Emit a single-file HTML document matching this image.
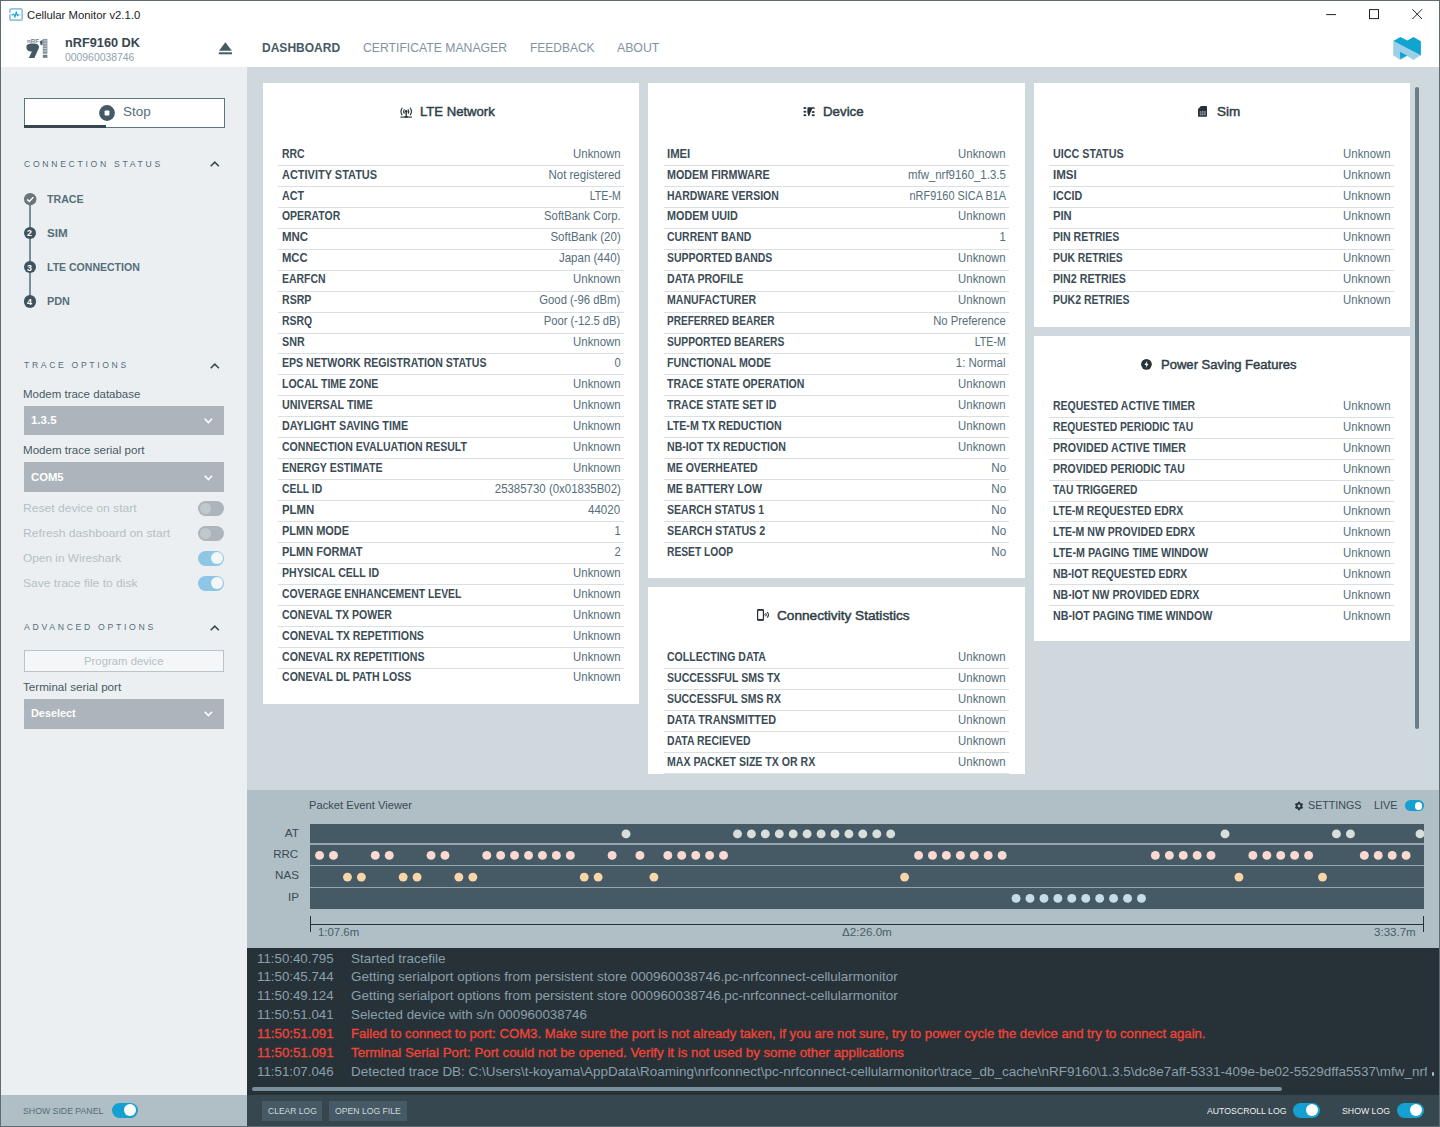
<!DOCTYPE html>
<html>
<head>
<meta charset="utf-8">
<title>Cellular Monitor v2.1.0</title>
<style>
*{box-sizing:border-box;margin:0;padding:0}
html,body{width:1440px;height:1127px;overflow:hidden;background:#fff;font-family:"Liberation Sans",sans-serif;color:#263238}
.abs{position:absolute}
.t{position:absolute;white-space:nowrap;line-height:1}
svg{position:absolute;overflow:visible}
#titlebar{left:0;top:0;width:1440px;height:30px;background:#fff}
#navbar{left:0;top:30px;width:1440px;height:37px;background:#fff}
#sidebar{left:0;top:67px;width:247px;height:1028px;background:#eceff1}
#main{left:247px;top:67px;width:1193px;height:723px;background:#cfd8dc}
#pev{left:247px;top:790px;width:1193px;height:158.3px;background:#b0bec5}
#log{left:247px;top:948.3px;width:1193px;height:147px;background:#263238}
#botL{left:0;top:1095px;width:247px;height:32px;background:#b0bec5}
#botR{left:247px;top:1095.3px;width:1193px;height:32px;background:#37474f}
.card{position:absolute;background:#fff;width:376.4px}
.sep{position:absolute;width:345.6px;height:1px;background:#d9e0e4}
.tg{position:absolute;border-radius:8px}
.tg u{position:absolute;border-radius:50%;background:#fff}
.dd{position:absolute;left:24px;width:200.2px;background:#abb5bb}
</style>
</head>
<body>
<div id="titlebar" class="abs"></div>
<div id="navbar" class="abs"></div>
<div id="sidebar" class="abs"></div>
<div id="main" class="abs"></div>
<div id="pev" class="abs"></div>
<div id="log" class="abs"></div>
<div id="botL" class="abs"></div>
<div id="botR" class="abs"></div>
<svg style="left:9px;top:7.86px" width="15" height="14" viewBox="0 0 15 14">
<rect x="0.9" y="0.9" width="12.3" height="11.3" rx="1.5" fill="#fff" stroke="#8ec5e6" stroke-width="1.8"/>
<rect x="0" y="4.9" width="1.9" height="1.5" fill="#fff"/>
<path d="M0.4 7H4M9 7H13" stroke="#9fcfea" stroke-width="1.2" fill="none"/>
<path d="M3.2 6.7L4.9 6.1L6 9.2L7.3 3.7L8.3 8L9.2 6.6" stroke="#0fa3d0" stroke-width="1.05" fill="none" stroke-linejoin="round" stroke-linecap="round"/>
</svg>
<span class="t" style="top:9.00px;font-size:11.60px;color:#222;left:27.26px;transform-origin:0 0;transform:scaleX(0.9762);">Cellular Monitor v2.1.0</span>
<svg style="left:1320px;top:4px" width="110" height="22" viewBox="1320 4 110 22">
<path d="M1326.2 14.6H1336" stroke="#222" stroke-width="1" fill="none"/>
<rect x="1369.5" y="9.6" width="9" height="9" fill="none" stroke="#222" stroke-width="1"/>
<path d="M1412.4 9.3L1422 19M1422 9.3L1412.4 19" stroke="#222" stroke-width="1" fill="none"/>
</svg>
<svg style="left:26px;top:38px" width="23" height="21" viewBox="26 38 23 21">
<path d="M26.4 47.4C26.2 44.6 28.2 43.4 32.6 43.4C37.2 43.4 39.6 44.8 38.9 48L34.4 58H28.8L31.9 51.4C28.4 51.6 26.6 50.2 26.4 47.4Z" fill="#465a66"/>
<path d="M39.7 41.4L42.6 39.8V44.4L40.8 45.4Z" fill="#465a66"/>
<rect x="42.8" y="39" width="4.6" height="14.8" fill="#8796a0"/>
<rect x="42.8" y="54.8" width="4.6" height="3" fill="#6b7d88"/>
<path d="M43.6 41H46.8M43.6 43.5H46.8M43.6 46H46.8M43.6 48.5H46.8M43.6 51H46.8" stroke="#dfe5e8" stroke-width=".7"/>
</svg>
<span class="t" style="top:39.40px;font-size:5.60px;color:#6d7f8a;font-weight:bold;left:26.59px;transform-origin:0 0;transform:scaleX(1.0946);">nRF</span>
<span class="t" style="top:36.00px;font-size:13.20px;color:#37474f;font-weight:bold;left:64.87px;transform-origin:0 0;transform:scaleX(0.9653);">nRF9160 DK</span>
<span class="t" style="top:51.60px;font-size:10.80px;color:#90a4ae;left:65.01px;transform-origin:0 0;transform:scaleX(0.9627);">000960038746</span>
<svg style="left:218px;top:42px" width="15" height="13" viewBox="218 42 15 13">
<path d="M225.4 42.3L231.8 50.7H219Z" fill="#455a64"/><rect x="218.8" y="52.3" width="13.2" height="2" fill="#455a64"/></svg>
<span class="t" style="top:42.00px;font-size:12.80px;color:#455a64;font-weight:bold;left:262.30px;transform-origin:0 0;transform:scaleX(0.9395);">DASHBOARD</span>
<span class="t" style="top:42.00px;font-size:12.80px;color:#8193a0;left:363.10px;transform-origin:0 0;transform:scaleX(0.9541);">CERTIFICATE MANAGER</span>
<span class="t" style="top:42.00px;font-size:12.80px;color:#8193a0;left:529.70px;transform-origin:0 0;transform:scaleX(0.9357);">FEEDBACK</span>
<span class="t" style="top:42.00px;font-size:12.80px;color:#8193a0;left:616.60px;transform-origin:0 0;transform:scaleX(0.9582);">ABOUT</span>
<svg style="left:1393px;top:36px" width="29" height="25" viewBox="1393 36 29 25">
<path d="M1393.2 40.8L1400 38L1420.9 52V55.2L1413.4 59.9L1407.2 56.1L1400.4 59.9L1393.2 55.2Z" fill="#9dcfe9"/>
<path d="M1393.6 41L1400.3 36.9L1407.4 40.6L1413.4 36.9L1420.9 41.2V55.2Z" fill="#10a4d0"/>
<path d="M1399.9 51.7L1407.1 55.4L1400.2 59Z" fill="#10a4d0"/>
</svg>
<div class="abs" style="left:0;top:0;width:1440px;height:1px;background:#5d6b72"></div><div class="abs" style="left:0;top:0;width:1px;height:1127px;background:#5d6b72"></div><div class="abs" style="left:1439px;top:0;width:1px;height:1127px;background:#5d6b72"></div><div class="abs" style="left:0;top:1126px;width:1440px;height:1px;background:#5d6b72"></div>
<div class="abs" style="left:23.5px;top:97.5px;width:201px;height:30.5px;background:#fff;border:1px solid #5f7480"></div>
<div class="abs" style="left:23.5px;top:125px;width:82.3px;height:3px;background:#37474f"></div>
<svg style="left:99px;top:104.5px" width="16" height="16" viewBox="0 0 16 16"><circle cx="8" cy="8" r="7.9" fill="#455a64"/><rect x="5.6" y="5.6" width="4.8" height="4.8" rx=".6" fill="#fff"/></svg>
<span class="t" style="top:105.30px;font-size:13.20px;color:#546e7a;left:123.47px;transform-origin:0 0;transform:scaleX(1.0239);">Stop</span>
<span class="t" style="top:158.80px;font-size:9.40px;color:#546e7a;letter-spacing:2.90px;left:23.68px;transform-origin:0 0;transform:scaleX(0.9223);">CONNECTION STATUS</span>
<svg style="left:210.3px;top:161.3px" width="10" height="6" viewBox="0 0 10 6"><path d="M0.7 5.2L4.8 1.1L8.9 5.2" stroke="#37474f" stroke-width="1.5" fill="none"/></svg>
<span class="t" style="top:360.40px;font-size:9.40px;color:#546e7a;letter-spacing:2.90px;left:23.68px;transform-origin:0 0;transform:scaleX(0.9180);">TRACE OPTIONS</span>
<svg style="left:210.3px;top:363.0px" width="10" height="6" viewBox="0 0 10 6"><path d="M0.7 5.2L4.8 1.1L8.9 5.2" stroke="#37474f" stroke-width="1.5" fill="none"/></svg>
<span class="t" style="top:622.40px;font-size:9.40px;color:#546e7a;letter-spacing:2.90px;left:23.68px;transform-origin:0 0;transform:scaleX(0.9252);">ADVANCED OPTIONS</span>
<svg style="left:210.3px;top:625.3px" width="10" height="6" viewBox="0 0 10 6"><path d="M0.7 5.2L4.8 1.1L8.9 5.2" stroke="#37474f" stroke-width="1.5" fill="none"/></svg>
<div class="abs" style="left:29.1px;top:199px;width:1.5px;height:102px;background:#78909c"></div>
<svg style="left:23.6px;top:192.9px" width="13" height="13" viewBox="0 0 13 13"><circle cx="6.2" cy="6.2" r="6.2" fill="#6b7478"/><path d="M3.2 6.4L5.3 8.5L9.3 4.2" stroke="#fff" stroke-width="1.5" fill="none"/></svg>
<div class="abs" style="left:23.6px;top:227.0px;width:12.4px;height:12.4px;border-radius:50%;background:#3e5360"></div>
<span class="t" style="top:228.40px;font-size:9.40px;color:#fff;font-weight:bold;left:26.98px;transform-origin:0 0;transform:scaleX(0.9500);">2</span>
<div class="abs" style="left:23.6px;top:261.1px;width:12.4px;height:12.4px;border-radius:50%;background:#3e5360"></div>
<span class="t" style="top:262.50px;font-size:9.40px;color:#fff;font-weight:bold;left:26.98px;transform-origin:0 0;transform:scaleX(0.9500);">3</span>
<div class="abs" style="left:23.6px;top:295.2px;width:12.4px;height:12.4px;border-radius:50%;background:#3e5360"></div>
<span class="t" style="top:296.60px;font-size:9.40px;color:#fff;font-weight:bold;left:26.98px;transform-origin:0 0;transform:scaleX(0.9500);">4</span>
<span class="t" style="top:193.60px;font-size:11.80px;color:#546e7a;font-weight:bold;left:47.25px;transform-origin:0 0;transform:scaleX(0.8996);">TRACE</span>
<span class="t" style="top:227.70px;font-size:11.80px;color:#546e7a;font-weight:bold;left:47.25px;transform-origin:0 0;transform:scaleX(0.9846);">SIM</span>
<span class="t" style="top:261.80px;font-size:11.80px;color:#546e7a;font-weight:bold;left:47.25px;transform-origin:0 0;transform:scaleX(0.8921);">LTE CONNECTION</span>
<span class="t" style="top:295.90px;font-size:11.80px;color:#546e7a;font-weight:bold;left:47.25px;transform-origin:0 0;transform:scaleX(0.9214);">PDN</span>
<span class="t" style="top:388.80px;font-size:11.80px;color:#455a64;left:23.35px;transform-origin:0 0;transform:scaleX(0.9726);">Modem trace database</span>
<div class="dd" style="top:405.5px;height:29.7px"></div>
<span class="t" style="top:415.30px;font-size:11.80px;color:#fff;font-weight:bold;left:31.15px;transform-origin:0 0;transform:scaleX(0.9738);">1.3.5</span>
<svg style="left:204.1px;top:418.0px" width="9" height="6" viewBox="0 0 9 6"><path d="M0.7 0.8L4.4 4.6L8.1 0.8" stroke="#fff" stroke-width="1.6" fill="none"/></svg>
<span class="t" style="top:445.40px;font-size:11.80px;color:#455a64;left:23.35px;transform-origin:0 0;transform:scaleX(0.9801);">Modem trace serial port</span>
<div class="dd" style="top:462.1px;height:29.9px"></div>
<span class="t" style="top:471.90px;font-size:11.80px;color:#fff;font-weight:bold;left:30.65px;transform-origin:0 0;transform:scaleX(0.9551);">COM5</span>
<svg style="left:204.1px;top:474.7px" width="9" height="6" viewBox="0 0 9 6"><path d="M0.7 0.8L4.4 4.6L8.1 0.8" stroke="#fff" stroke-width="1.6" fill="none"/></svg>
<span class="t" style="top:503.00px;font-size:11.80px;color:#b4c0c6;left:23.35px;transform-origin:0 0;transform:scaleX(1.0256);">Reset device on start</span>
<span class="t" style="top:527.80px;font-size:11.80px;color:#b4c0c6;left:23.35px;transform-origin:0 0;transform:scaleX(1.0286);">Refresh dashboard on start</span>
<span class="t" style="top:552.80px;font-size:11.80px;color:#b4c0c6;left:23.35px;transform-origin:0 0;transform:scaleX(1.0049);">Open in Wireshark</span>
<span class="t" style="top:577.60px;font-size:11.80px;color:#b4c0c6;left:23.35px;transform-origin:0 0;transform:scaleX(1.0208);">Save trace file to disk</span>
<div class="tg" style="left:198.1px;top:501.1px;width:26.3px;height:14.8px;background:#abb5bb"><u style="left:1.7px;top:1.7px;width:11.4px;height:11.4px;background:#c0c8cc"></u></div>
<div class="tg" style="left:198.1px;top:526.2px;width:26.3px;height:14.8px;background:#abb5bb"><u style="left:1.7px;top:1.7px;width:11.4px;height:11.4px;background:#c0c8cc"></u></div>
<div class="tg" style="left:198.1px;top:551.1px;width:26.3px;height:14.8px;background:#8ec6e6"><u style="left:12.9px;top:1.4px;width:12.0px;height:12.0px;background:#f4f6f7"></u></div>
<div class="tg" style="left:198.1px;top:575.8px;width:26.3px;height:14.8px;background:#8ec6e6"><u style="left:12.9px;top:1.4px;width:12.0px;height:12.0px;background:#f4f6f7"></u></div>
<div class="abs" style="left:24px;top:649.5px;width:200.2px;height:22.3px;background:#f4f6f7;border:1px solid #b9c5ca"></div>
<span class="t" style="top:655.50px;font-size:11.80px;color:#b4c0c6;left:84.15px;transform-origin:0 0;transform:scaleX(0.9617);">Program device</span>
<span class="t" style="top:682.40px;font-size:11.80px;color:#455a64;left:23.35px;transform-origin:0 0;transform:scaleX(0.9850);">Terminal serial port</span>
<div class="dd" style="top:699.1px;height:29.8px"></div>
<span class="t" style="top:707.80px;font-size:11.80px;color:#fff;font-weight:bold;left:30.65px;transform-origin:0 0;transform:scaleX(0.9203);">Deselect</span>
<svg style="left:204.1px;top:710.5px" width="9" height="6" viewBox="0 0 9 6"><path d="M0.7 0.8L4.4 4.6L8.1 0.8" stroke="#fff" stroke-width="1.6" fill="none"/></svg>
<div class="card" style="left:263px;top:82.6px;height:621.2px"></div>
<span class="t" style="top:148.60px;font-size:11.90px;color:#3b4c56;font-weight:bold;left:281.75px;transform-origin:0 0;transform:scaleX(0.8799);">RRC</span>
<span class="t" style="top:148.60px;font-size:11.90px;color:#546e7a;right:819.52px;transform-origin:100% 0;transform:scaleX(0.9575);">Unknown</span>
<div class="sep" style="left:278.2px;top:164.90px"></div>
<span class="t" style="top:169.56px;font-size:11.90px;color:#3b4c56;font-weight:bold;left:281.75px;transform-origin:0 0;transform:scaleX(0.9225);">ACTIVITY STATUS</span>
<span class="t" style="top:169.56px;font-size:11.90px;color:#546e7a;right:819.52px;transform-origin:100% 0;transform:scaleX(0.9676);">Not registered</span>
<div class="sep" style="left:278.2px;top:185.85px"></div>
<span class="t" style="top:190.51px;font-size:11.90px;color:#3b4c56;font-weight:bold;left:281.75px;transform-origin:0 0;transform:scaleX(0.9032);">ACT</span>
<span class="t" style="top:190.51px;font-size:11.90px;color:#546e7a;right:819.52px;transform-origin:100% 0;transform:scaleX(0.8929);">LTE-M</span>
<div class="sep" style="left:278.2px;top:206.80px"></div>
<span class="t" style="top:211.46px;font-size:11.90px;color:#3b4c56;font-weight:bold;left:281.75px;transform-origin:0 0;transform:scaleX(0.8774);">OPERATOR</span>
<span class="t" style="top:211.46px;font-size:11.90px;color:#546e7a;right:819.52px;transform-origin:100% 0;transform:scaleX(0.9495);">SoftBank Corp.</span>
<div class="sep" style="left:278.2px;top:227.75px"></div>
<span class="t" style="top:232.42px;font-size:11.90px;color:#3b4c56;font-weight:bold;left:281.75px;transform-origin:0 0;transform:scaleX(0.9659);">MNC</span>
<span class="t" style="top:232.42px;font-size:11.90px;color:#546e7a;right:819.52px;transform-origin:100% 0;transform:scaleX(0.9665);">SoftBank (20)</span>
<div class="sep" style="left:278.2px;top:248.70px"></div>
<span class="t" style="top:253.38px;font-size:11.90px;color:#3b4c56;font-weight:bold;left:281.75px;transform-origin:0 0;transform:scaleX(0.9438);">MCC</span>
<span class="t" style="top:253.38px;font-size:11.90px;color:#546e7a;right:819.52px;transform-origin:100% 0;transform:scaleX(0.9701);">Japan (440)</span>
<div class="sep" style="left:278.2px;top:269.65px"></div>
<span class="t" style="top:274.33px;font-size:11.90px;color:#3b4c56;font-weight:bold;left:281.75px;transform-origin:0 0;transform:scaleX(0.8774);">EARFCN</span>
<span class="t" style="top:274.33px;font-size:11.90px;color:#546e7a;right:819.52px;transform-origin:100% 0;transform:scaleX(0.9575);">Unknown</span>
<div class="sep" style="left:278.2px;top:290.60px"></div>
<span class="t" style="top:295.28px;font-size:11.90px;color:#3b4c56;font-weight:bold;left:281.75px;transform-origin:0 0;transform:scaleX(0.8888);">RSRP</span>
<span class="t" style="top:295.28px;font-size:11.90px;color:#546e7a;right:819.52px;transform-origin:100% 0;transform:scaleX(0.9498);">Good (-96 dBm)</span>
<div class="sep" style="left:278.2px;top:311.55px"></div>
<span class="t" style="top:316.24px;font-size:11.90px;color:#3b4c56;font-weight:bold;left:281.75px;transform-origin:0 0;transform:scaleX(0.8781);">RSRQ</span>
<span class="t" style="top:316.24px;font-size:11.90px;color:#546e7a;right:819.52px;transform-origin:100% 0;transform:scaleX(0.9419);">Poor (-12.5 dB)</span>
<div class="sep" style="left:278.2px;top:332.50px"></div>
<span class="t" style="top:337.19px;font-size:11.90px;color:#3b4c56;font-weight:bold;left:281.75px;transform-origin:0 0;transform:scaleX(0.9029);">SNR</span>
<span class="t" style="top:337.19px;font-size:11.90px;color:#546e7a;right:819.52px;transform-origin:100% 0;transform:scaleX(0.9575);">Unknown</span>
<div class="sep" style="left:278.2px;top:353.45px"></div>
<span class="t" style="top:358.15px;font-size:11.90px;color:#3b4c56;font-weight:bold;left:281.75px;transform-origin:0 0;transform:scaleX(0.8894);">EPS NETWORK REGISTRATION STATUS</span>
<span class="t" style="top:358.15px;font-size:11.90px;color:#546e7a;right:819.52px;transform-origin:100% 0;transform:scaleX(0.9400);">0</span>
<div class="sep" style="left:278.2px;top:374.40px"></div>
<span class="t" style="top:379.11px;font-size:11.90px;color:#3b4c56;font-weight:bold;left:281.75px;transform-origin:0 0;transform:scaleX(0.8850);">LOCAL TIME ZONE</span>
<span class="t" style="top:379.11px;font-size:11.90px;color:#546e7a;right:819.52px;transform-origin:100% 0;transform:scaleX(0.9575);">Unknown</span>
<div class="sep" style="left:278.2px;top:395.35px"></div>
<span class="t" style="top:400.06px;font-size:11.90px;color:#3b4c56;font-weight:bold;left:281.75px;transform-origin:0 0;transform:scaleX(0.9039);">UNIVERSAL TIME</span>
<span class="t" style="top:400.06px;font-size:11.90px;color:#546e7a;right:819.52px;transform-origin:100% 0;transform:scaleX(0.9575);">Unknown</span>
<div class="sep" style="left:278.2px;top:416.30px"></div>
<span class="t" style="top:421.01px;font-size:11.90px;color:#3b4c56;font-weight:bold;left:281.75px;transform-origin:0 0;transform:scaleX(0.9043);">DAYLIGHT SAVING TIME</span>
<span class="t" style="top:421.01px;font-size:11.90px;color:#546e7a;right:819.52px;transform-origin:100% 0;transform:scaleX(0.9575);">Unknown</span>
<div class="sep" style="left:278.2px;top:437.25px"></div>
<span class="t" style="top:441.97px;font-size:11.90px;color:#3b4c56;font-weight:bold;left:281.75px;transform-origin:0 0;transform:scaleX(0.8856);">CONNECTION EVALUATION RESULT</span>
<span class="t" style="top:441.97px;font-size:11.90px;color:#546e7a;right:819.52px;transform-origin:100% 0;transform:scaleX(0.9575);">Unknown</span>
<div class="sep" style="left:278.2px;top:458.20px"></div>
<span class="t" style="top:462.92px;font-size:11.90px;color:#3b4c56;font-weight:bold;left:281.75px;transform-origin:0 0;transform:scaleX(0.8936);">ENERGY ESTIMATE</span>
<span class="t" style="top:462.92px;font-size:11.90px;color:#546e7a;right:819.52px;transform-origin:100% 0;transform:scaleX(0.9575);">Unknown</span>
<div class="sep" style="left:278.2px;top:479.15px"></div>
<span class="t" style="top:483.88px;font-size:11.90px;color:#3b4c56;font-weight:bold;left:281.75px;transform-origin:0 0;transform:scaleX(0.8727);">CELL ID</span>
<span class="t" style="top:483.88px;font-size:11.90px;color:#546e7a;right:819.52px;transform-origin:100% 0;transform:scaleX(0.9637);">25385730 (0x01835B02)</span>
<div class="sep" style="left:278.2px;top:500.10px"></div>
<span class="t" style="top:504.83px;font-size:11.90px;color:#3b4c56;font-weight:bold;left:281.75px;transform-origin:0 0;transform:scaleX(0.9609);">PLMN</span>
<span class="t" style="top:504.83px;font-size:11.90px;color:#546e7a;right:819.52px;transform-origin:100% 0;transform:scaleX(0.9696);">44020</span>
<div class="sep" style="left:278.2px;top:521.05px"></div>
<span class="t" style="top:525.79px;font-size:11.90px;color:#3b4c56;font-weight:bold;left:281.75px;transform-origin:0 0;transform:scaleX(0.9229);">PLMN MODE</span>
<span class="t" style="top:525.79px;font-size:11.90px;color:#546e7a;right:819.52px;transform-origin:100% 0;transform:scaleX(0.9400);">1</span>
<div class="sep" style="left:278.2px;top:542.00px"></div>
<span class="t" style="top:546.75px;font-size:11.90px;color:#3b4c56;font-weight:bold;left:281.75px;transform-origin:0 0;transform:scaleX(0.9253);">PLMN FORMAT</span>
<span class="t" style="top:546.75px;font-size:11.90px;color:#546e7a;right:819.52px;transform-origin:100% 0;transform:scaleX(0.9400);">2</span>
<div class="sep" style="left:278.2px;top:562.95px"></div>
<span class="t" style="top:567.70px;font-size:11.90px;color:#3b4c56;font-weight:bold;left:281.75px;transform-origin:0 0;transform:scaleX(0.8886);">PHYSICAL CELL ID</span>
<span class="t" style="top:567.70px;font-size:11.90px;color:#546e7a;right:819.52px;transform-origin:100% 0;transform:scaleX(0.9575);">Unknown</span>
<div class="sep" style="left:278.2px;top:583.90px"></div>
<span class="t" style="top:588.65px;font-size:11.90px;color:#3b4c56;font-weight:bold;left:281.75px;transform-origin:0 0;transform:scaleX(0.8730);">COVERAGE ENHANCEMENT LEVEL</span>
<span class="t" style="top:588.65px;font-size:11.90px;color:#546e7a;right:819.52px;transform-origin:100% 0;transform:scaleX(0.9575);">Unknown</span>
<div class="sep" style="left:278.2px;top:604.85px"></div>
<span class="t" style="top:609.61px;font-size:11.90px;color:#3b4c56;font-weight:bold;left:281.75px;transform-origin:0 0;transform:scaleX(0.8877);">CONEVAL TX POWER</span>
<span class="t" style="top:609.61px;font-size:11.90px;color:#546e7a;right:819.52px;transform-origin:100% 0;transform:scaleX(0.9575);">Unknown</span>
<div class="sep" style="left:278.2px;top:625.80px"></div>
<span class="t" style="top:630.56px;font-size:11.90px;color:#3b4c56;font-weight:bold;left:281.75px;transform-origin:0 0;transform:scaleX(0.8978);">CONEVAL TX REPETITIONS</span>
<span class="t" style="top:630.56px;font-size:11.90px;color:#546e7a;right:819.52px;transform-origin:100% 0;transform:scaleX(0.9575);">Unknown</span>
<div class="sep" style="left:278.2px;top:646.75px"></div>
<span class="t" style="top:651.52px;font-size:11.90px;color:#3b4c56;font-weight:bold;left:281.75px;transform-origin:0 0;transform:scaleX(0.8935);">CONEVAL RX REPETITIONS</span>
<span class="t" style="top:651.52px;font-size:11.90px;color:#546e7a;right:819.52px;transform-origin:100% 0;transform:scaleX(0.9575);">Unknown</span>
<div class="sep" style="left:278.2px;top:667.70px"></div>
<span class="t" style="top:672.48px;font-size:11.90px;color:#3b4c56;font-weight:bold;left:281.75px;transform-origin:0 0;transform:scaleX(0.8888);">CONEVAL DL PATH LOSS</span>
<span class="t" style="top:672.48px;font-size:11.90px;color:#546e7a;right:819.52px;transform-origin:100% 0;transform:scaleX(0.9575);">Unknown</span>
<div class="card" style="left:648.3px;top:82.6px;height:495.2px"></div>
<span class="t" style="top:148.60px;font-size:11.90px;color:#3b4c56;font-weight:bold;left:667.05px;transform-origin:0 0;transform:scaleX(0.9517);">IMEI</span>
<span class="t" style="top:148.60px;font-size:11.90px;color:#546e7a;right:434.22px;transform-origin:100% 0;transform:scaleX(0.9575);">Unknown</span>
<div class="sep" style="left:663.5px;top:164.90px"></div>
<span class="t" style="top:169.56px;font-size:11.90px;color:#3b4c56;font-weight:bold;left:667.05px;transform-origin:0 0;transform:scaleX(0.9036);">MODEM FIRMWARE</span>
<span class="t" style="top:169.56px;font-size:11.90px;color:#546e7a;right:434.22px;transform-origin:100% 0;transform:scaleX(0.9614);">mfw_nrf9160_1.3.5</span>
<div class="sep" style="left:663.5px;top:185.85px"></div>
<span class="t" style="top:190.51px;font-size:11.90px;color:#3b4c56;font-weight:bold;left:667.05px;transform-origin:0 0;transform:scaleX(0.8812);">HARDWARE VERSION</span>
<span class="t" style="top:190.51px;font-size:11.90px;color:#546e7a;right:434.22px;transform-origin:100% 0;transform:scaleX(0.9189);">nRF9160 SICA B1A</span>
<div class="sep" style="left:663.5px;top:206.80px"></div>
<span class="t" style="top:211.46px;font-size:11.90px;color:#3b4c56;font-weight:bold;left:667.05px;transform-origin:0 0;transform:scaleX(0.9091);">MODEM UUID</span>
<span class="t" style="top:211.46px;font-size:11.90px;color:#546e7a;right:434.22px;transform-origin:100% 0;transform:scaleX(0.9575);">Unknown</span>
<div class="sep" style="left:663.5px;top:227.75px"></div>
<span class="t" style="top:232.42px;font-size:11.90px;color:#3b4c56;font-weight:bold;left:667.05px;transform-origin:0 0;transform:scaleX(0.8798);">CURRENT BAND</span>
<span class="t" style="top:232.42px;font-size:11.90px;color:#546e7a;right:434.22px;transform-origin:100% 0;transform:scaleX(0.9400);">1</span>
<div class="sep" style="left:663.5px;top:248.70px"></div>
<span class="t" style="top:253.38px;font-size:11.90px;color:#3b4c56;font-weight:bold;left:667.05px;transform-origin:0 0;transform:scaleX(0.8811);">SUPPORTED BANDS</span>
<span class="t" style="top:253.38px;font-size:11.90px;color:#546e7a;right:434.22px;transform-origin:100% 0;transform:scaleX(0.9575);">Unknown</span>
<div class="sep" style="left:663.5px;top:269.65px"></div>
<span class="t" style="top:274.33px;font-size:11.90px;color:#3b4c56;font-weight:bold;left:667.05px;transform-origin:0 0;transform:scaleX(0.8904);">DATA PROFILE</span>
<span class="t" style="top:274.33px;font-size:11.90px;color:#546e7a;right:434.22px;transform-origin:100% 0;transform:scaleX(0.9575);">Unknown</span>
<div class="sep" style="left:663.5px;top:290.60px"></div>
<span class="t" style="top:295.28px;font-size:11.90px;color:#3b4c56;font-weight:bold;left:667.05px;transform-origin:0 0;transform:scaleX(0.8871);">MANUFACTURER</span>
<span class="t" style="top:295.28px;font-size:11.90px;color:#546e7a;right:434.22px;transform-origin:100% 0;transform:scaleX(0.9575);">Unknown</span>
<div class="sep" style="left:663.5px;top:311.55px"></div>
<span class="t" style="top:316.24px;font-size:11.90px;color:#3b4c56;font-weight:bold;left:667.05px;transform-origin:0 0;transform:scaleX(0.8472);">PREFERRED BEARER</span>
<span class="t" style="top:316.24px;font-size:11.90px;color:#546e7a;right:434.22px;transform-origin:100% 0;transform:scaleX(0.9452);">No Preference</span>
<div class="sep" style="left:663.5px;top:332.50px"></div>
<span class="t" style="top:337.19px;font-size:11.90px;color:#3b4c56;font-weight:bold;left:667.05px;transform-origin:0 0;transform:scaleX(0.8665);">SUPPORTED BEARERS</span>
<span class="t" style="top:337.19px;font-size:11.90px;color:#546e7a;right:434.22px;transform-origin:100% 0;transform:scaleX(0.8929);">LTE-M</span>
<div class="sep" style="left:663.5px;top:353.45px"></div>
<span class="t" style="top:358.15px;font-size:11.90px;color:#3b4c56;font-weight:bold;left:667.05px;transform-origin:0 0;transform:scaleX(0.8959);">FUNCTIONAL MODE</span>
<span class="t" style="top:358.15px;font-size:11.90px;color:#546e7a;right:434.22px;transform-origin:100% 0;transform:scaleX(0.9655);">1: Normal</span>
<div class="sep" style="left:663.5px;top:374.40px"></div>
<span class="t" style="top:379.11px;font-size:11.90px;color:#3b4c56;font-weight:bold;left:667.05px;transform-origin:0 0;transform:scaleX(0.8893);">TRACE STATE OPERATION</span>
<span class="t" style="top:379.11px;font-size:11.90px;color:#546e7a;right:434.22px;transform-origin:100% 0;transform:scaleX(0.9575);">Unknown</span>
<div class="sep" style="left:663.5px;top:395.35px"></div>
<span class="t" style="top:400.06px;font-size:11.90px;color:#3b4c56;font-weight:bold;left:667.05px;transform-origin:0 0;transform:scaleX(0.8885);">TRACE STATE SET ID</span>
<span class="t" style="top:400.06px;font-size:11.90px;color:#546e7a;right:434.22px;transform-origin:100% 0;transform:scaleX(0.9575);">Unknown</span>
<div class="sep" style="left:663.5px;top:416.30px"></div>
<span class="t" style="top:421.01px;font-size:11.90px;color:#3b4c56;font-weight:bold;left:667.05px;transform-origin:0 0;transform:scaleX(0.8963);">LTE-M TX REDUCTION</span>
<span class="t" style="top:421.01px;font-size:11.90px;color:#546e7a;right:434.22px;transform-origin:100% 0;transform:scaleX(0.9575);">Unknown</span>
<div class="sep" style="left:663.5px;top:437.25px"></div>
<span class="t" style="top:441.97px;font-size:11.90px;color:#3b4c56;font-weight:bold;left:667.05px;transform-origin:0 0;transform:scaleX(0.8916);">NB-IOT TX REDUCTION</span>
<span class="t" style="top:441.97px;font-size:11.90px;color:#546e7a;right:434.22px;transform-origin:100% 0;transform:scaleX(0.9575);">Unknown</span>
<div class="sep" style="left:663.5px;top:458.20px"></div>
<span class="t" style="top:462.92px;font-size:11.90px;color:#3b4c56;font-weight:bold;left:667.05px;transform-origin:0 0;transform:scaleX(0.8816);">ME OVERHEATED</span>
<span class="t" style="top:462.92px;font-size:11.90px;color:#546e7a;right:434.22px;transform-origin:100% 0;transform:scaleX(0.9847);">No</span>
<div class="sep" style="left:663.5px;top:479.15px"></div>
<span class="t" style="top:483.88px;font-size:11.90px;color:#3b4c56;font-weight:bold;left:667.05px;transform-origin:0 0;transform:scaleX(0.8893);">ME BATTERY LOW</span>
<span class="t" style="top:483.88px;font-size:11.90px;color:#546e7a;right:434.22px;transform-origin:100% 0;transform:scaleX(0.9847);">No</span>
<div class="sep" style="left:663.5px;top:500.10px"></div>
<span class="t" style="top:504.83px;font-size:11.90px;color:#3b4c56;font-weight:bold;left:667.05px;transform-origin:0 0;transform:scaleX(0.8886);">SEARCH STATUS 1</span>
<span class="t" style="top:504.83px;font-size:11.90px;color:#546e7a;right:434.22px;transform-origin:100% 0;transform:scaleX(0.9847);">No</span>
<div class="sep" style="left:663.5px;top:521.05px"></div>
<span class="t" style="top:525.79px;font-size:11.90px;color:#3b4c56;font-weight:bold;left:667.05px;transform-origin:0 0;transform:scaleX(0.8987);">SEARCH STATUS 2</span>
<span class="t" style="top:525.79px;font-size:11.90px;color:#546e7a;right:434.22px;transform-origin:100% 0;transform:scaleX(0.9847);">No</span>
<div class="sep" style="left:663.5px;top:542.00px"></div>
<span class="t" style="top:546.75px;font-size:11.90px;color:#3b4c56;font-weight:bold;left:667.05px;transform-origin:0 0;transform:scaleX(0.8621);">RESET LOOP</span>
<span class="t" style="top:546.75px;font-size:11.90px;color:#546e7a;right:434.22px;transform-origin:100% 0;transform:scaleX(0.9847);">No</span>
<div class="card" style="left:1033.6px;top:82.6px;height:244.6px"></div>
<span class="t" style="top:148.60px;font-size:11.90px;color:#3b4c56;font-weight:bold;left:1052.85px;transform-origin:0 0;transform:scaleX(0.9028);">UICC STATUS</span>
<span class="t" style="top:148.60px;font-size:11.90px;color:#546e7a;right:49.62px;transform-origin:100% 0;transform:scaleX(0.9575);">Unknown</span>
<div class="sep" style="left:1048.8px;top:164.90px"></div>
<span class="t" style="top:169.56px;font-size:11.90px;color:#3b4c56;font-weight:bold;left:1052.85px;transform-origin:0 0;transform:scaleX(0.9721);">IMSI</span>
<span class="t" style="top:169.56px;font-size:11.90px;color:#546e7a;right:49.62px;transform-origin:100% 0;transform:scaleX(0.9575);">Unknown</span>
<div class="sep" style="left:1048.8px;top:185.85px"></div>
<span class="t" style="top:190.51px;font-size:11.90px;color:#3b4c56;font-weight:bold;left:1052.85px;transform-origin:0 0;transform:scaleX(0.9010);">ICCID</span>
<span class="t" style="top:190.51px;font-size:11.90px;color:#546e7a;right:49.62px;transform-origin:100% 0;transform:scaleX(0.9575);">Unknown</span>
<div class="sep" style="left:1048.8px;top:206.80px"></div>
<span class="t" style="top:211.46px;font-size:11.90px;color:#3b4c56;font-weight:bold;left:1052.85px;transform-origin:0 0;transform:scaleX(0.9416);">PIN</span>
<span class="t" style="top:211.46px;font-size:11.90px;color:#546e7a;right:49.62px;transform-origin:100% 0;transform:scaleX(0.9575);">Unknown</span>
<div class="sep" style="left:1048.8px;top:227.75px"></div>
<span class="t" style="top:232.42px;font-size:11.90px;color:#3b4c56;font-weight:bold;left:1052.85px;transform-origin:0 0;transform:scaleX(0.8875);">PIN RETRIES</span>
<span class="t" style="top:232.42px;font-size:11.90px;color:#546e7a;right:49.62px;transform-origin:100% 0;transform:scaleX(0.9575);">Unknown</span>
<div class="sep" style="left:1048.8px;top:248.70px"></div>
<span class="t" style="top:253.38px;font-size:11.90px;color:#3b4c56;font-weight:bold;left:1052.85px;transform-origin:0 0;transform:scaleX(0.8726);">PUK RETRIES</span>
<span class="t" style="top:253.38px;font-size:11.90px;color:#546e7a;right:49.62px;transform-origin:100% 0;transform:scaleX(0.9575);">Unknown</span>
<div class="sep" style="left:1048.8px;top:269.65px"></div>
<span class="t" style="top:274.33px;font-size:11.90px;color:#3b4c56;font-weight:bold;left:1052.85px;transform-origin:0 0;transform:scaleX(0.8978);">PIN2 RETRIES</span>
<span class="t" style="top:274.33px;font-size:11.90px;color:#546e7a;right:49.62px;transform-origin:100% 0;transform:scaleX(0.9575);">Unknown</span>
<div class="sep" style="left:1048.8px;top:290.60px"></div>
<span class="t" style="top:295.28px;font-size:11.90px;color:#3b4c56;font-weight:bold;left:1052.85px;transform-origin:0 0;transform:scaleX(0.8834);">PUK2 RETRIES</span>
<span class="t" style="top:295.28px;font-size:11.90px;color:#546e7a;right:49.62px;transform-origin:100% 0;transform:scaleX(0.9575);">Unknown</span>
<div class="card" style="left:1033.6px;top:335.6px;height:305.2px"></div>
<span class="t" style="top:401.20px;font-size:11.90px;color:#3b4c56;font-weight:bold;left:1052.85px;transform-origin:0 0;transform:scaleX(0.8831);">REQUESTED ACTIVE TIMER</span>
<span class="t" style="top:401.20px;font-size:11.90px;color:#546e7a;right:49.62px;transform-origin:100% 0;transform:scaleX(0.9575);">Unknown</span>
<div class="sep" style="left:1048.8px;top:416.70px"></div>
<span class="t" style="top:422.16px;font-size:11.90px;color:#3b4c56;font-weight:bold;left:1052.85px;transform-origin:0 0;transform:scaleX(0.8666);">REQUESTED PERIODIC TAU</span>
<span class="t" style="top:422.16px;font-size:11.90px;color:#546e7a;right:49.62px;transform-origin:100% 0;transform:scaleX(0.9575);">Unknown</span>
<div class="sep" style="left:1048.8px;top:437.65px"></div>
<span class="t" style="top:443.11px;font-size:11.90px;color:#3b4c56;font-weight:bold;left:1052.85px;transform-origin:0 0;transform:scaleX(0.8925);">PROVIDED ACTIVE TIMER</span>
<span class="t" style="top:443.11px;font-size:11.90px;color:#546e7a;right:49.62px;transform-origin:100% 0;transform:scaleX(0.9575);">Unknown</span>
<div class="sep" style="left:1048.8px;top:458.60px"></div>
<span class="t" style="top:464.07px;font-size:11.90px;color:#3b4c56;font-weight:bold;left:1052.85px;transform-origin:0 0;transform:scaleX(0.8799);">PROVIDED PERIODIC TAU</span>
<span class="t" style="top:464.07px;font-size:11.90px;color:#546e7a;right:49.62px;transform-origin:100% 0;transform:scaleX(0.9575);">Unknown</span>
<div class="sep" style="left:1048.8px;top:479.55px"></div>
<span class="t" style="top:485.02px;font-size:11.90px;color:#3b4c56;font-weight:bold;left:1052.85px;transform-origin:0 0;transform:scaleX(0.8660);">TAU TRIGGERED</span>
<span class="t" style="top:485.02px;font-size:11.90px;color:#546e7a;right:49.62px;transform-origin:100% 0;transform:scaleX(0.9575);">Unknown</span>
<div class="sep" style="left:1048.8px;top:500.50px"></div>
<span class="t" style="top:505.98px;font-size:11.90px;color:#3b4c56;font-weight:bold;left:1052.85px;transform-origin:0 0;transform:scaleX(0.8731);">LTE-M REQUESTED EDRX</span>
<span class="t" style="top:505.98px;font-size:11.90px;color:#546e7a;right:49.62px;transform-origin:100% 0;transform:scaleX(0.9575);">Unknown</span>
<div class="sep" style="left:1048.8px;top:521.45px"></div>
<span class="t" style="top:526.93px;font-size:11.90px;color:#3b4c56;font-weight:bold;left:1052.85px;transform-origin:0 0;transform:scaleX(0.8856);">LTE-M NW PROVIDED EDRX</span>
<span class="t" style="top:526.93px;font-size:11.90px;color:#546e7a;right:49.62px;transform-origin:100% 0;transform:scaleX(0.9575);">Unknown</span>
<div class="sep" style="left:1048.8px;top:542.40px"></div>
<span class="t" style="top:547.88px;font-size:11.90px;color:#3b4c56;font-weight:bold;left:1052.85px;transform-origin:0 0;transform:scaleX(0.9018);">LTE-M PAGING TIME WINDOW</span>
<span class="t" style="top:547.88px;font-size:11.90px;color:#546e7a;right:49.62px;transform-origin:100% 0;transform:scaleX(0.9575);">Unknown</span>
<div class="sep" style="left:1048.8px;top:563.35px"></div>
<span class="t" style="top:568.84px;font-size:11.90px;color:#3b4c56;font-weight:bold;left:1052.85px;transform-origin:0 0;transform:scaleX(0.8685);">NB-IOT REQUESTED EDRX</span>
<span class="t" style="top:568.84px;font-size:11.90px;color:#546e7a;right:49.62px;transform-origin:100% 0;transform:scaleX(0.9575);">Unknown</span>
<div class="sep" style="left:1048.8px;top:584.30px"></div>
<span class="t" style="top:589.80px;font-size:11.90px;color:#3b4c56;font-weight:bold;left:1052.85px;transform-origin:0 0;transform:scaleX(0.8821);">NB-IOT NW PROVIDED EDRX</span>
<span class="t" style="top:589.80px;font-size:11.90px;color:#546e7a;right:49.62px;transform-origin:100% 0;transform:scaleX(0.9575);">Unknown</span>
<div class="sep" style="left:1048.8px;top:605.25px"></div>
<span class="t" style="top:610.75px;font-size:11.90px;color:#3b4c56;font-weight:bold;left:1052.85px;transform-origin:0 0;transform:scaleX(0.8980);">NB-IOT PAGING TIME WINDOW</span>
<span class="t" style="top:610.75px;font-size:11.90px;color:#546e7a;right:49.62px;transform-origin:100% 0;transform:scaleX(0.9575);">Unknown</span>
<div class="card" style="left:648.3px;top:586.6px;height:187.1px"></div>
<span class="t" style="top:652.30px;font-size:11.90px;color:#3b4c56;font-weight:bold;left:667.05px;transform-origin:0 0;transform:scaleX(0.8848);">COLLECTING DATA</span>
<span class="t" style="top:652.30px;font-size:11.90px;color:#546e7a;right:434.22px;transform-origin:100% 0;transform:scaleX(0.9575);">Unknown</span>
<div class="sep" style="left:663.5px;top:667.80px"></div>
<span class="t" style="top:673.26px;font-size:11.90px;color:#3b4c56;font-weight:bold;left:667.05px;transform-origin:0 0;transform:scaleX(0.8860);">SUCCESSFUL SMS TX</span>
<span class="t" style="top:673.26px;font-size:11.90px;color:#546e7a;right:434.22px;transform-origin:100% 0;transform:scaleX(0.9575);">Unknown</span>
<div class="sep" style="left:663.5px;top:688.75px"></div>
<span class="t" style="top:694.21px;font-size:11.90px;color:#3b4c56;font-weight:bold;left:667.05px;transform-origin:0 0;transform:scaleX(0.8808);">SUCCESSFUL SMS RX</span>
<span class="t" style="top:694.21px;font-size:11.90px;color:#546e7a;right:434.22px;transform-origin:100% 0;transform:scaleX(0.9575);">Unknown</span>
<div class="sep" style="left:663.5px;top:709.70px"></div>
<span class="t" style="top:715.17px;font-size:11.90px;color:#3b4c56;font-weight:bold;left:667.05px;transform-origin:0 0;transform:scaleX(0.9139);">DATA TRANSMITTED</span>
<span class="t" style="top:715.17px;font-size:11.90px;color:#546e7a;right:434.22px;transform-origin:100% 0;transform:scaleX(0.9575);">Unknown</span>
<div class="sep" style="left:663.5px;top:730.65px"></div>
<span class="t" style="top:736.12px;font-size:11.90px;color:#3b4c56;font-weight:bold;left:667.05px;transform-origin:0 0;transform:scaleX(0.8794);">DATA RECIEVED</span>
<span class="t" style="top:736.12px;font-size:11.90px;color:#546e7a;right:434.22px;transform-origin:100% 0;transform:scaleX(0.9575);">Unknown</span>
<div class="sep" style="left:663.5px;top:751.60px"></div>
<span class="t" style="top:757.08px;font-size:11.90px;color:#3b4c56;font-weight:bold;left:667.05px;transform-origin:0 0;transform:scaleX(0.8877);">MAX PACKET SIZE TX OR RX</span>
<span class="t" style="top:757.08px;font-size:11.90px;color:#546e7a;right:434.22px;transform-origin:100% 0;transform:scaleX(0.9575);">Unknown</span>
<div class="sep" style="left:663.5px;top:772.55px"></div>
<svg style="left:400px;top:106.5px" width="13" height="11" viewBox="0 0 13 11">
<g stroke="#263238" fill="none" stroke-width="1.1"><path d="M2.3 .7Q-.3 4.4 2.3 8.2M10.1 .7Q12.7 4.4 10.1 8.2M4.4 2.2Q2.9 4.4 4.4 6.6M8 2.2Q9.5 4.4 8 6.6"/>
<path d="M6.2 5V9.6" stroke-width="1.3"/><path d="M.4 10.1H12"/></g>
<circle cx="6.2" cy="4.3" r="1.25" fill="#263238"/><ellipse cx="6.2" cy="9.8" rx="2" ry=".9" fill="#263238"/>
</svg>
<span class="t" style="top:105.30px;font-size:13.10px;color:#2f3e46;left:420.28px;transform-origin:0 0;transform:scaleX(1.0010);-webkit-text-stroke:.45px #2f3e46;">LTE Network</span>
<svg style="left:803px;top:106.5px" width="13" height="10" viewBox="0 0 13 10">
<g fill="#263238"><ellipse cx="1.9" cy="1.1" rx="1.5" ry="1"/><ellipse cx="1.9" cy="4.8" rx="1.5" ry="1"/><ellipse cx="1.9" cy="8.2" rx="1.5" ry="1"/>
<path d="M4.6 .2H11.4L12.2 1.4L9.4 1.7L7.7 5L6.3 9H5.3L4.3 5Z"/>
<ellipse cx="10.2" cy="4.9" rx="1.5" ry="1"/><ellipse cx="10.2" cy="8.2" rx="1.6" ry="1"/></g>
</svg>
<span class="t" style="top:105.30px;font-size:13.10px;color:#2f3e46;left:823.03px;transform-origin:0 0;transform:scaleX(1.0162);-webkit-text-stroke:.45px #2f3e46;">Device</span>
<svg style="left:1198.3px;top:106px" width="9" height="11" viewBox="0 0 9 11">
<path d="M3 0H8.2Q9 0 9 .8V9.9Q9 10.7 8.2 10.7H.8Q0 10.7 0 9.9V3Z" fill="#263238"/>
<rect x="1.8" y="5.2" width="5.8" height="4" fill="#93a1aa"/>
<path d="M3.4 5.2V9M5.6 5.2V9M1.6 7.1H7.4" stroke="#263238" stroke-width=".6"/>
</svg>
<span class="t" style="top:105.30px;font-size:13.10px;color:#2f3e46;left:1216.78px;transform-origin:0 0;transform:scaleX(1.0318);-webkit-text-stroke:.45px #2f3e46;">Sim</span>
<svg style="left:1141px;top:359px" width="11" height="11" viewBox="0 0 11 11">
<circle cx="5.45" cy="5.35" r="5.35" fill="#263238"/>
<path d="M6.3 1.8L3.4 6H5.3L4.7 9L7.6 4.8H5.7Z" fill="#fff"/>
</svg>
<span class="t" style="top:357.80px;font-size:13.10px;color:#2f3e46;left:1160.53px;transform-origin:0 0;transform:scaleX(0.9961);-webkit-text-stroke:.45px #2f3e46;">Power Saving Features</span>
<svg style="left:756.6px;top:609px" width="13" height="12" viewBox="0 0 13 12">
<rect x=".6" y=".6" width="5.8" height="10.6" rx=".9" fill="none" stroke="#263238" stroke-width="1.2"/><rect x=".4" y=".2" width="6.2" height="1.6" rx=".5" fill="#263238"/><rect x=".4" y="10" width="6.2" height="1.6" rx=".5" fill="#263238"/>
<circle cx="7.1" cy="5.8" r=".7" fill="#263238"/>
<path d="M8.6 4.2A2.4 2.4 0 0 1 8.6 7.4M10.2 3A4.2 4.2 0 0 1 10.2 8.6" stroke="#263238" stroke-width="1.1" fill="none"/>
</svg>
<span class="t" style="top:608.60px;font-size:13.10px;color:#2f3e46;left:776.53px;transform-origin:0 0;transform:scaleX(1.0418);-webkit-text-stroke:.45px #2f3e46;">Connectivity Statistics</span>
<div class="abs" style="left:1415.1px;top:87.2px;width:4.2px;height:641.6px;border-radius:2px;background:#687e89"></div>
<span class="t" style="top:800.40px;font-size:11.30px;color:#3a4a53;left:309.28px;transform-origin:0 0;transform:scaleX(0.9893);">Packet Event Viewer</span>
<svg style="left:1294.4px;top:800.8px" width="10" height="10" viewBox="0 0 24 24"><path fill="#263238" d="M12 15.5A3.5 3.5 0 0 1 8.5 12 3.5 3.5 0 0 1 12 8.500000000000002a3.5 3.5 0 0 1 3.5 3.5 3.5 3.5 0 0 1-3.5 3.5m7.430000000000001-2.5300000000000002c.04-.32.07-.64.07-.97s-.03-.66-.07-1l2.11-1.63c.19-.15.24-.42.12-.64l-2-3.46c-.12-.22-.39-.31-.61-.22l-2.49 1c-.52-.39-1.060-.73-1.690-.98l-.37-2.650A.506.506 0 0 0 14 2h-4c-.25 0-.46.18-.5.42l-.37 2.650c-.63.25-1.170.59-1.690.98l-2.490-1c-.22-.09-.49 0-.61.22l-2 3.460c-.13.22-.07.49.12.64L4.570 11c-.04.34-.07.67-.07 1s.03.650.07.97l-2.110 1.660c-.19.150-.25.420-.12.640l2 3.460c.12.220.39.300.61.220l2.490-1.010c.52.400 1.060.740 1.690.990l.37 2.650c.04.240.25.420.5.420h4c.25 0 .46-.18.5-.42l.37-2.650c.63-.26 1.170-.59 1.690-.99l2.490 1.010c.22.080.49 0 .61-.22l2-3.460c.12-.22.070-.49-.12-.64z"/></svg>
<span class="t" style="top:800.30px;font-size:11.30px;color:#3a4a53;left:1308.38px;transform-origin:0 0;transform:scaleX(0.9472);">SETTINGS</span>
<span class="t" style="top:800.30px;font-size:11.30px;color:#3a4a53;left:1374.38px;transform-origin:0 0;transform:scaleX(0.9558);">LIVE</span>
<div class="tg" style="left:1404.8px;top:800px;width:19.2px;height:11.3px;background:#14a0d0"><u style="left:9.8px;top:1.7px;width:7.9px;height:7.9px"></u></div>
<div class="abs" style="left:309.6px;top:823.8px;width:1114.4px;height:85.2px;background:#95a6af;overflow:hidden">
<div class="abs" style="left:0;top:0.0px;width:100%;height:19.4px;background:#455a64"></div>
<div class="abs" style="left:0;top:21.3px;width:100%;height:19.7px;background:#455a64"></div>
<div class="abs" style="left:0;top:42.6px;width:100%;height:20.6px;background:#455a64"></div>
<div class="abs" style="left:0;top:64.5px;width:100%;height:20.7px;background:#455a64"></div>
<svg style="left:0;top:0" width="1114.4" height="85.2" viewBox="309.6 823.8 1114.4 85.2"><g fill="#d7dedc"><circle cx="625.6" cy="833.7" r="4.45"/><circle cx="737.1" cy="833.7" r="4.45"/><circle cx="751.0" cy="833.7" r="4.45"/><circle cx="764.9" cy="833.7" r="4.45"/><circle cx="778.9" cy="833.7" r="4.45"/><circle cx="792.8" cy="833.7" r="4.45"/><circle cx="806.7" cy="833.7" r="4.45"/><circle cx="820.7" cy="833.7" r="4.45"/><circle cx="834.6" cy="833.7" r="4.45"/><circle cx="848.5" cy="833.7" r="4.45"/><circle cx="862.4" cy="833.7" r="4.45"/><circle cx="876.4" cy="833.7" r="4.45"/><circle cx="890.3" cy="833.7" r="4.45"/><circle cx="1224.7" cy="833.7" r="4.45"/><circle cx="1336.1" cy="833.7" r="4.45"/><circle cx="1350.1" cy="833.7" r="4.45"/><circle cx="1419.7" cy="833.7" r="4.45"/></g><g fill="#fbd9d3"><circle cx="319.1" cy="855.2" r="4.45"/><circle cx="333.0" cy="855.2" r="4.45"/><circle cx="374.8" cy="855.2" r="4.45"/><circle cx="388.8" cy="855.2" r="4.45"/><circle cx="430.6" cy="855.2" r="4.45"/><circle cx="444.5" cy="855.2" r="4.45"/><circle cx="486.3" cy="855.2" r="4.45"/><circle cx="500.2" cy="855.2" r="4.45"/><circle cx="514.1" cy="855.2" r="4.45"/><circle cx="528.1" cy="855.2" r="4.45"/><circle cx="542.0" cy="855.2" r="4.45"/><circle cx="555.9" cy="855.2" r="4.45"/><circle cx="569.9" cy="855.2" r="4.45"/><circle cx="611.7" cy="855.2" r="4.45"/><circle cx="639.5" cy="855.2" r="4.45"/><circle cx="667.4" cy="855.2" r="4.45"/><circle cx="681.3" cy="855.2" r="4.45"/><circle cx="695.3" cy="855.2" r="4.45"/><circle cx="709.2" cy="855.2" r="4.45"/><circle cx="723.1" cy="855.2" r="4.45"/><circle cx="918.2" cy="855.2" r="4.45"/><circle cx="932.1" cy="855.2" r="4.45"/><circle cx="946.0" cy="855.2" r="4.45"/><circle cx="960.0" cy="855.2" r="4.45"/><circle cx="973.9" cy="855.2" r="4.45"/><circle cx="987.8" cy="855.2" r="4.45"/><circle cx="1001.8" cy="855.2" r="4.45"/><circle cx="1155.0" cy="855.2" r="4.45"/><circle cx="1169.0" cy="855.2" r="4.45"/><circle cx="1182.9" cy="855.2" r="4.45"/><circle cx="1196.8" cy="855.2" r="4.45"/><circle cx="1210.7" cy="855.2" r="4.45"/><circle cx="1252.5" cy="855.2" r="4.45"/><circle cx="1266.5" cy="855.2" r="4.45"/><circle cx="1280.4" cy="855.2" r="4.45"/><circle cx="1294.3" cy="855.2" r="4.45"/><circle cx="1308.3" cy="855.2" r="4.45"/><circle cx="1364.0" cy="855.2" r="4.45"/><circle cx="1377.9" cy="855.2" r="4.45"/><circle cx="1391.9" cy="855.2" r="4.45"/><circle cx="1405.8" cy="855.2" r="4.45"/></g><g fill="#f7d6a8"><circle cx="347.0" cy="876.9" r="4.45"/><circle cx="360.9" cy="876.9" r="4.45"/><circle cx="402.7" cy="876.9" r="4.45"/><circle cx="416.6" cy="876.9" r="4.45"/><circle cx="458.4" cy="876.9" r="4.45"/><circle cx="472.4" cy="876.9" r="4.45"/><circle cx="583.8" cy="876.9" r="4.45"/><circle cx="597.7" cy="876.9" r="4.45"/><circle cx="653.5" cy="876.9" r="4.45"/><circle cx="904.2" cy="876.9" r="4.45"/><circle cx="1238.6" cy="876.9" r="4.45"/><circle cx="1322.2" cy="876.9" r="4.45"/></g><g fill="#c5dcea"><circle cx="1015.7" cy="898.2" r="4.45"/><circle cx="1029.6" cy="898.2" r="4.45"/><circle cx="1043.6" cy="898.2" r="4.45"/><circle cx="1057.5" cy="898.2" r="4.45"/><circle cx="1071.4" cy="898.2" r="4.45"/><circle cx="1085.4" cy="898.2" r="4.45"/><circle cx="1099.3" cy="898.2" r="4.45"/><circle cx="1113.2" cy="898.2" r="4.45"/><circle cx="1127.2" cy="898.2" r="4.45"/><circle cx="1141.1" cy="898.2" r="4.45"/></g></svg>
</div>
<span class="t" style="top:826.60px;font-size:11.60px;color:#3a4a53;right:1141.54px;transform-origin:100% 0;transform:scaleX(1.0197);">AT</span>
<span class="t" style="top:847.70px;font-size:11.60px;color:#3a4a53;right:1141.54px;transform-origin:100% 0;transform:scaleX(0.9928);">RRC</span>
<span class="t" style="top:869.40px;font-size:11.60px;color:#3a4a53;right:1141.54px;transform-origin:100% 0;transform:scaleX(0.9958);">NAS</span>
<span class="t" style="top:891.00px;font-size:11.60px;color:#3a4a53;right:1141.54px;transform-origin:100% 0;transform:scaleX(1.0069);">IP</span>
<div class="abs" style="left:309.6px;top:924px;width:1114.4px;height:1.2px;background:#263238"></div>
<div class="abs" style="left:309.8px;top:916.3px;width:1px;height:15.7px;background:#263238"></div>
<div class="abs" style="left:1423px;top:916.3px;width:1px;height:15.7px;background:#263238"></div>
<span class="t" style="top:927.30px;font-size:11.30px;color:#4a5d68;left:318.28px;transform-origin:0 0;transform:scaleX(1.0071);">1:07.6m</span>
<span class="t" style="top:927.40px;font-size:11.30px;color:#4a5d68;left:841.68px;transform-origin:0 0;transform:scaleX(1.0298);">&#916;2:26.0m</span>
<span class="t" style="top:927.30px;font-size:11.30px;color:#4a5d68;left:1373.68px;transform-origin:0 0;transform:scaleX(1.0218);">3:33.7m</span>
<div class="abs" style="left:247px;top:948.3px;width:1179.8px;height:147px;overflow:hidden">
<div class="abs" style="left:-247px;top:-948.3px;width:1440px;height:1127px">
<span class="t" style="top:952.50px;font-size:12.80px;color:#8c9faa;left:256.60px;transform-origin:0 0;transform:scaleX(1.0389);">11:50:40.795</span>
<span class="t" style="top:952.50px;font-size:12.80px;color:#8c9faa;left:351.30px;transform-origin:0 0;transform:scaleX(1.0539);">Started tracefile</span>
<span class="t" style="top:971.38px;font-size:12.80px;color:#8c9faa;left:256.60px;transform-origin:0 0;transform:scaleX(1.0389);">11:50:45.744</span>
<span class="t" style="top:971.38px;font-size:12.80px;color:#8c9faa;left:351.30px;transform-origin:0 0;transform:scaleX(1.0513);">Getting serialport options from persistent store 000960038746.pc-nrfconnect-cellularmonitor</span>
<span class="t" style="top:990.26px;font-size:12.80px;color:#8c9faa;left:256.60px;transform-origin:0 0;transform:scaleX(1.0389);">11:50:49.124</span>
<span class="t" style="top:990.26px;font-size:12.80px;color:#8c9faa;left:351.30px;transform-origin:0 0;transform:scaleX(1.0513);">Getting serialport options from persistent store 000960038746.pc-nrfconnect-cellularmonitor</span>
<span class="t" style="top:1009.14px;font-size:12.80px;color:#8c9faa;left:256.60px;transform-origin:0 0;transform:scaleX(1.0389);">11:50:51.041</span>
<span class="t" style="top:1009.14px;font-size:12.80px;color:#8c9faa;left:351.30px;transform-origin:0 0;transform:scaleX(1.0429);">Selected device with s/n 000960038746</span>
<span class="t" style="top:1028.02px;font-size:12.80px;color:#f44336;left:256.60px;transform-origin:0 0;transform:scaleX(1.0389);-webkit-text-stroke:.3px #f44336;">11:50:51.091</span>
<span class="t" style="top:1028.02px;font-size:12.80px;color:#f44336;left:351.30px;transform-origin:0 0;transform:scaleX(1.0277);-webkit-text-stroke:.3px #f44336;">Failed to connect to port: COM3. Make sure the port is not already taken, if you are not sure, try to power cycle the device and try to connect again.</span>
<span class="t" style="top:1046.90px;font-size:12.80px;color:#f44336;left:256.60px;transform-origin:0 0;transform:scaleX(1.0389);-webkit-text-stroke:.3px #f44336;">11:50:51.091</span>
<span class="t" style="top:1046.90px;font-size:12.80px;color:#f44336;left:351.30px;transform-origin:0 0;transform:scaleX(1.0392);-webkit-text-stroke:.3px #f44336;">Terminal Serial Port: Port could not be opened. Verify it is not used by some other applications</span>
<span class="t" style="top:1065.78px;font-size:12.80px;color:#8c9faa;left:256.60px;transform-origin:0 0;transform:scaleX(1.0389);">11:51:07.046</span>
<span class="t" style="top:1065.78px;font-size:12.80px;color:#8c9faa;left:351.30px;transform-origin:0 0;transform:scaleX(1.0531);">Detected trace DB: C:\Users\t-koyama\AppData\Roaming\nrfconnect\pc-nrfconnect-cellularmonitor\trace_db_cache\nRF9160\1.3.5\dc8e7aff-5331-409e-be02-5529dffa5537\mfw_nrf</span>
</div></div>
<div class="abs" style="left:252px;top:1087.2px;width:1029.7px;height:3.6px;border-radius:2px;background:#78909c"></div>
<div class="abs" style="left:1431.7px;top:1071.8px;width:2.4px;height:4.4px;border-radius:1px;background:#b0bec5"></div>
<span class="t" style="top:1106.00px;font-size:9.60px;color:#546e7a;left:23.27px;transform-origin:0 0;transform:scaleX(0.9098);">SHOW SIDE PANEL</span>
<div class="tg" style="left:111.7px;top:1102.8px;width:26.4px;height:15.4px;background:#14a0d0"><u style="left:12.8px;top:1.7px;width:12px;height:12px"></u></div>
<div class="abs" style="left:262px;top:1101.2px;width:60px;height:19.6px;background:#455a64"></div>
<div class="abs" style="left:329.2px;top:1101.2px;width:77.8px;height:19.6px;background:#455a64"></div>
<span class="t" style="top:1106.30px;font-size:9.60px;color:#cfd8dc;left:267.77px;transform-origin:0 0;transform:scaleX(0.8879);">CLEAR LOG</span>
<span class="t" style="top:1106.30px;font-size:9.60px;color:#cfd8dc;left:335.27px;transform-origin:0 0;transform:scaleX(0.9003);">OPEN LOG FILE</span>
<span class="t" style="top:1106.40px;font-size:9.60px;color:#eceff1;left:1206.67px;transform-origin:0 0;transform:scaleX(0.9088);">AUTOSCROLL LOG</span>
<div class="tg" style="left:1293.3px;top:1102.8px;width:26.7px;height:15.4px;background:#14a0d0"><u style="left:13px;top:1.7px;width:12px;height:12px"></u></div>
<span class="t" style="top:1106.40px;font-size:9.60px;color:#eceff1;left:1341.97px;transform-origin:0 0;transform:scaleX(0.9106);">SHOW LOG</span>
<div class="tg" style="left:1397.2px;top:1102.8px;width:26.6px;height:15.4px;background:#14a0d0"><u style="left:13px;top:1.7px;width:12px;height:12px"></u></div>
</body>
</html>
